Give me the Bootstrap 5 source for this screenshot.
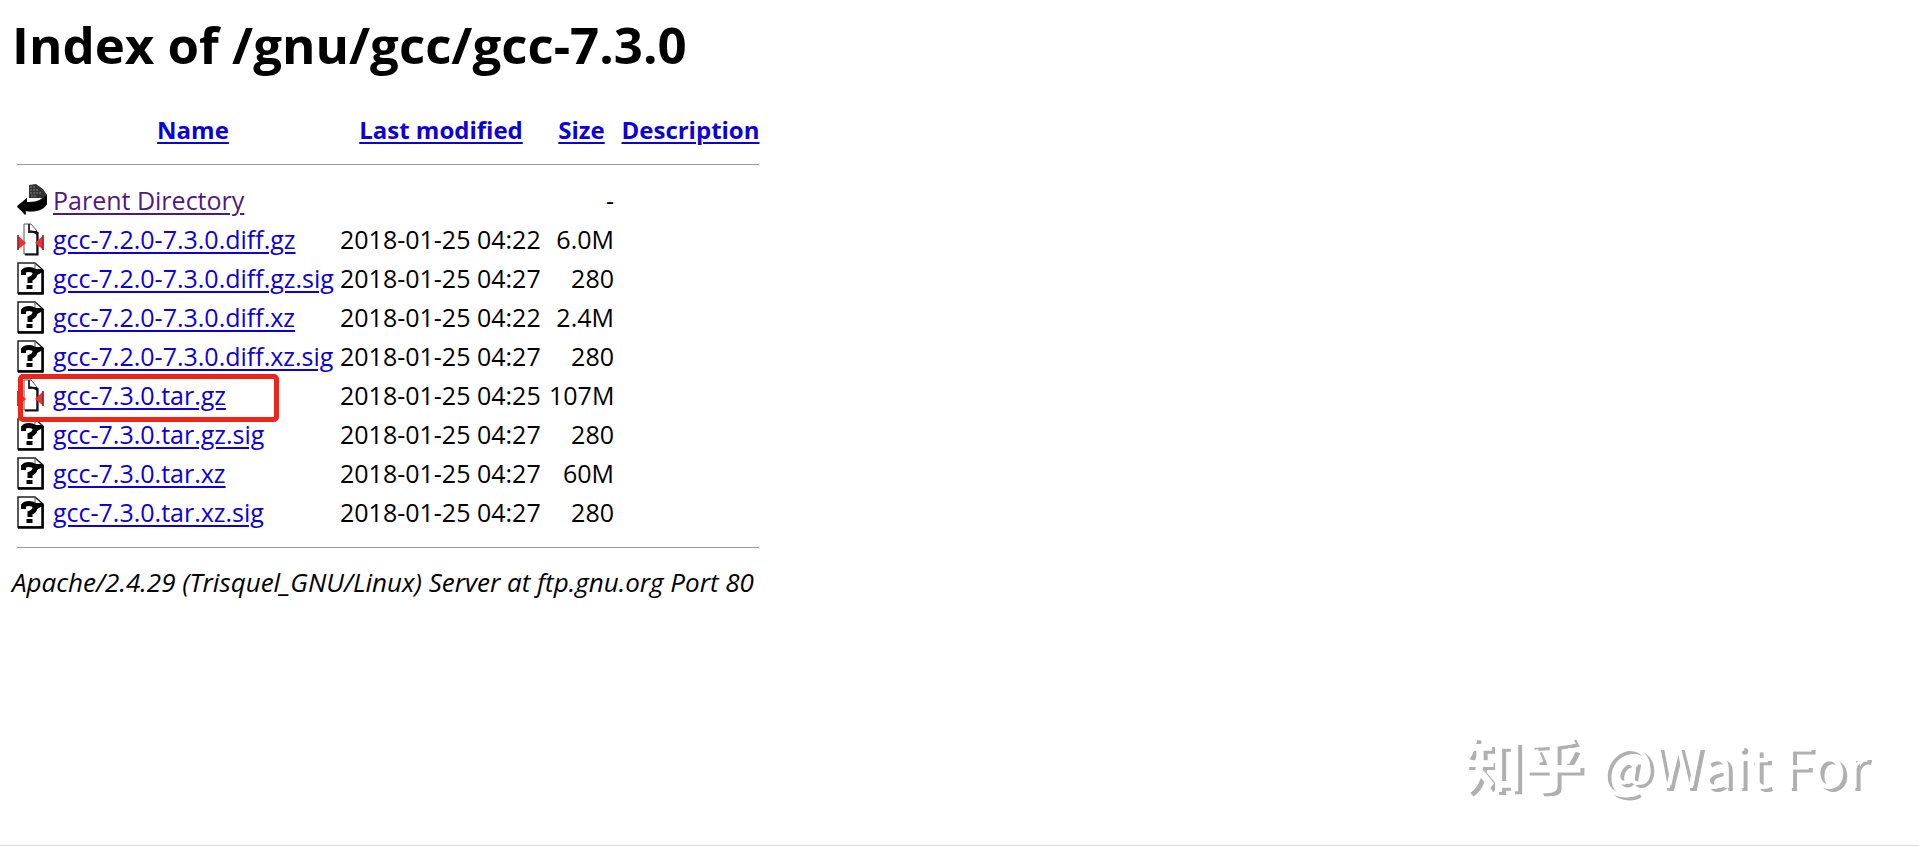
<!DOCTYPE html>
<html lang="en">
<head>
<meta charset="utf-8">
<meta name="viewport" content="width=device-width, initial-scale=1">
<title>Index of /gnu/gcc/gcc-7.3.0</title>
<link href="https://cdn.jsdelivr.net/npm/bootstrap@5.3.0/dist/css/bootstrap.min.css" rel="stylesheet">
<style>
  body { font-family: "Open Sans", "Noto Sans", sans-serif; font-size: 25px; line-height: 39px; color: #000; background: #fff; padding-bottom: 2px; }
  h1 { font-size: 51px; line-height: 64px; margin: 12px 0 34px 12px; }
  a { color: #0c00d6; text-decoration-thickness: 2px; text-underline-offset: 3px; }
  a.visited-link { color: #4f1a80; }
  .listing { table-layout: fixed; width: 743px; margin-left: 17px; }
  .listing th, .listing td { padding: 0 7px 0 0; white-space: nowrap; height: 39px; }
  .listing th { font-size: 24px; }
  .listing th:last-child { padding: 0; }
  .listing hr { border: 0; height: 1px; background: #999; opacity: 1; margin: 15px 0 16px; width: 742px; }
  .listing .rule { height: auto; padding: 0; }
  .col-icon { width: 36px; }
  .col-name { width: 287px; }
  .col-date { width: 209px; }
  .col-size { width: 72px; }
  .listing svg { display: block; width: 27px; height: 33px; }
  .listing svg.back-icon { width: 30px; }
  .marker { left: 1px; top: -2px; width: 261px; height: 48px; border: 5px solid #ec2518; border-radius: 5px; pointer-events: none; }
  address { font-size: 26px; line-height: 36px; }
  .signature { font-family: "Noto Sans CJK SC", sans-serif; font-size: 56px; line-height: 72px; color: #fff; text-shadow: 4px 3px 0 #b0b0b0; }
  .signature-site { font-size: 60px; font-weight: 700; margin-right: 5px; }
  footer { border-bottom: 1px solid #d9d9d9; padding: 0 51px 45px 0; }
</style>
</head>
<body class="d-flex flex-column min-vh-100">
<svg class="d-none" aria-hidden="true">
  <symbol id="unknown" viewBox="0 0 27 33">
    <path d="M1 1H18L26 8V31H1Z" fill="#fff" stroke="#222" stroke-width="1.5"/>
    <path d="M1 31.500H25.500V8" fill="none" stroke="#000" stroke-width="2.500"/>
    <path d="M18 1V8H26" fill="none" stroke="#555"/>
    <path d="M17 7h9v3l-6 3z" fill="#000"/>
    <path d="M6.500 13V9.500Q8 7.500 12 7.500Q18 7.500 18 11.500Q18 15 13 17V21" fill="none" stroke="#000" stroke-width="5"/>
    <path d="M9.500 23h6v4h-6z" fill="#000"/>
  </symbol>
  <symbol id="compressed" viewBox="0 0 27 33">
    <path d="M7 1H14L20 8V31H7Z" fill="#fff" stroke="#555"/>
    <path d="M8 31.500H20.500V9" fill="none" stroke="#111" stroke-width="2.200"/>
    <path d="M12 1V9H20" fill="none" stroke="#222" stroke-width="1.800"/>
    <path d="M12 7L20 8.500V12z" fill="#111"/>
    <path d="M.5 12L9 20L.5 27Z M26.500 12L18 20L26.500 27Z" fill="#ee3030"/>
    <path d="M1 12V27 M26 12V27" stroke="#8c2525" stroke-width="1.500"/>
  </symbol>
  <symbol id="back" viewBox="0 0 30 33">
    <path d="M12 1L19 0L26 5L30 11V20C27 26 19 29 9 27V31L0 23L10 14V18C17 18 22 17 25 14H12Z" fill="#333"/>
    <path d="M0 22L10 14V18C18 19 25 17 30 10V20C26 26 18 28 8 27V31Z" fill="#000"/>
    <path d="M13 3H18M13 6H22M13 9H24M14 12H20" stroke="#888" stroke-dasharray="2 1"/>
  </symbol>
</svg>

<main>
  <h1 class="fw-bold">Index of /gnu/gcc/gcc-7.3.0</h1>
  <table class="listing">
    <colgroup><col class="col-icon"><col class="col-name"><col class="col-date"><col class="col-size"><col></colgroup>
    <thead>
      <tr class="text-center">
        <th></th>
        <th><a href="#name">Name</a></th>
        <th><a href="#modified">Last modified</a></th>
        <th><a href="#size">Size</a></th>
        <th><a href="#description">Description</a></th>
      </tr>
      <tr><td colspan="5" class="rule"><hr></td></tr>
    </thead>
    <tbody>
      <tr><td><svg class="back-icon"><use href="#back"/></svg></td><td><a class="visited-link" href="#parent">Parent Directory</a></td><td></td><td class="text-end">-</td><td></td></tr>
      <tr><td><svg><use href="#compressed"/></svg></td><td><a href="#f1">gcc-7.2.0-7.3.0.diff.gz</a></td><td>2018-01-25 04:22</td><td class="text-end">6.0M</td><td></td></tr>
      <tr><td><svg><use href="#unknown"/></svg></td><td><a href="#f2">gcc-7.2.0-7.3.0.diff.gz.sig</a></td><td>2018-01-25 04:27</td><td class="text-end">280</td><td></td></tr>
      <tr><td><svg><use href="#unknown"/></svg></td><td><a href="#f3">gcc-7.2.0-7.3.0.diff.xz</a></td><td>2018-01-25 04:22</td><td class="text-end">2.4M</td><td></td></tr>
      <tr><td><svg><use href="#unknown"/></svg></td><td><a href="#f4">gcc-7.2.0-7.3.0.diff.xz.sig</a></td><td>2018-01-25 04:27</td><td class="text-end">280</td><td></td></tr>
      <tr><td class="position-relative"><svg><use href="#compressed"/></svg><span class="marker position-absolute z-1"></span></td><td><a href="#f5">gcc-7.3.0.tar.gz</a></td><td>2018-01-25 04:25</td><td class="text-end">107M</td><td></td></tr>
      <tr><td><svg><use href="#unknown"/></svg></td><td><a href="#f6">gcc-7.3.0.tar.gz.sig</a></td><td>2018-01-25 04:27</td><td class="text-end">280</td><td></td></tr>
      <tr><td><svg><use href="#unknown"/></svg></td><td><a href="#f7">gcc-7.3.0.tar.xz</a></td><td>2018-01-25 04:27</td><td class="text-end">60M</td><td></td></tr>
      <tr><td><svg><use href="#unknown"/></svg></td><td><a href="#f8">gcc-7.3.0.tar.xz.sig</a></td><td>2018-01-25 04:27</td><td class="text-end">280</td><td></td></tr>
      <tr><td colspan="5" class="rule"><hr></td></tr>
    </tbody>
  </table>
  <address class="fst-italic m-0 ms-2 ps-1">Apache/2.4.29 (Trisquel_GNU/Linux) Server at ftp.gnu.org Port 80</address>
</main>
<footer class="mt-auto text-end">
  <span class="signature"><span class="signature-site">知乎</span> @Wait For</span>
</footer>
<script src="https://cdn.jsdelivr.net/npm/bootstrap@5.3.0/dist/js/bootstrap.bundle.min.js"></script>
</body>
</html>
